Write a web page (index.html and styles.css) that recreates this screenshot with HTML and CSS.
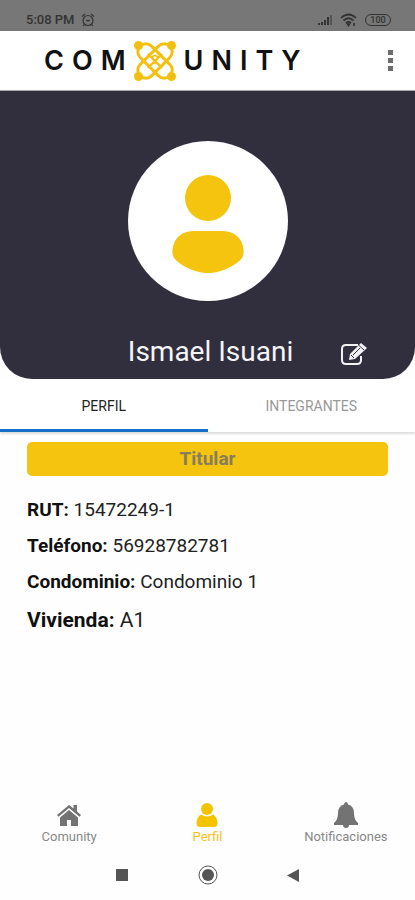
FILE: index.html
```html
<!DOCTYPE html>
<html lang="es">
<head>
  <meta charset="UTF-8">
  <meta name="viewport" content="width=device-width, initial-scale=1.0">
  <title>Comunity</title>
  <link rel="stylesheet" href="styles.css">
</head>
<body>

<div class="statusbar">
  <span>5:08 PM</span>
  <svg width="14" height="14" viewBox="0 0 14 14" fill="none" stroke="#333" stroke-width="1.2">
    <circle cx="7" cy="7.5" r="5"/>
    <path d="M1 3.5L4 1M13 3.5L10 1M3.5 11.5L2 13M10.5 11.5L12 13M5 7l2 1 2-1"/>
  </svg>
  <div class="status-icons">
    <svg width="16" height="12" viewBox="0 0 16 12" fill="#333">
      <path d="M1 9h2v2H1zM4 8h2v3H4zM7 6h2v5H7zM10 3h2v8h-2z"/>
      <path d="M13 1h2v10h-2z" fill="#555"/>
    </svg>
    <svg width="18" height="14" viewBox="0 0 18 14" fill="none" stroke="#333" stroke-width="1.7">
      <path d="M1 5Q8.500-2 16 5M3.500 7.500Q8.500 3 13.500 7.500M6 10Q8.500 8 11 10"/>
      <path d="M7.500 11h2l-1 1.500zM14 10v3"/>
    </svg>
    <span class="battery">100</span>
  </div>
</div>

<header class="topbar">
  <div class="logo" aria-label="Comunity">
    <span>C</span><span>O</span><span>M</span>
    <svg width="42" height="40" viewBox="0 0 42 40" fill="none" stroke="#f3c010" stroke-width="3">
      <g fill="#f3c010" stroke="none">
        <circle cx="4.500" cy="4.500" r="4.500"/>
        <circle cx="37.500" cy="4.500" r="4.500"/>
        <circle cx="4.500" cy="35.500" r="4.500"/>
        <circle cx="37.500" cy="35.500" r="4.500"/>
      </g>
      <rect x="0" y="12" width="42" height="16" rx="8" transform="rotate(45 21 20)"/>
      <rect x="0" y="12" width="42" height="16" rx="8" transform="rotate(-45 21 20)"/>
      <path d="M14 13l14 14M28 13L14 27" stroke-width="2"/>
      <circle cx="21" cy="17" r="2.500" stroke-width="1.6"/>
      <path d="M16 26q0-4 5-4t5 4" stroke-width="1.6"/>
    </svg>
    <span>U</span><span>N</span><span>I</span><span>T</span><span>Y</span>
  </div>
  <button class="menu-btn" aria-label="Menú">
    <svg width="6" height="22" viewBox="0 0 6 22" fill="#6d6d6d">
      <path d="M0 0h5v5H0zM0 8h5v5H0zM0 16h5v5H0z"/>
    </svg>
  </button>
</header>

<section class="hero">
  <div class="avatar">
    <svg width="74" height="100" viewBox="0 0 74 100" fill="#f4c40f">
      <circle cx="37" cy="23" r="23"/>
      <path d="M22 56H52Q64 56 70 66Q74 73 72 81C70 87 53 98 37 98S4 87 2 81Q0 73 4 66Q10 56 22 56z"/>
    </svg>
  </div>
  <div class="name-row">
    <h1>Ismael Isuani</h1>
    <button class="edit-btn" aria-label="Editar">
      <svg width="26" height="22" viewBox="0 0 26 22" fill="none" stroke="#f2f2f5" stroke-width="2">
        <path d="M17 2H5Q1 2 1 6V17Q1 21 5 21H16Q20 21 20 17V13"/>
        <path d="M8 17l1-6L20 0l6 5L14 16z" fill="#f2f2f5" stroke="none"/>
        <path d="M12 12l7-7M18 2.500l5 4.500M10 12l3 3" stroke="#312e3e" stroke-width="1"/>
      </svg>
    </button>
  </div>
</section>

<div class="tabs" role="tablist">
  <button class="tab active" role="tab" aria-selected="true">PERFIL</button>
  <button class="tab" role="tab" aria-selected="false">INTEGRANTES</button>
</div>

<main class="content">
  <div class="badge">Titular</div>
  <p><b>RUT:</b> 15472249-1</p>
  <p><b>Teléfono:</b> 56928782781</p>
  <p><b>Condominio:</b> Condominio 1</p>
  <p class="home"><b>Vivienda:</b> A1</p>
</main>

<nav class="bottom-nav">
  <a href="#">
    <svg width="26" height="26" viewBox="0 0 26 26" fill="#737373">
      <path d="M13 3L1 13l1.500 1.800L13 6l10.500 8.800L25 13l-4-3.500V3h-3.500v3.500z"/>
      <path d="M13 8L4 15.500V24h7v-6h4v6h7v-8.500z"/>
    </svg>
    Comunity
  </a>
  <a href="#" class="active">
    <svg width="26" height="26" viewBox="0 0 26 26" fill="#f5c400">
      <circle cx="13" cy="7" r="6"/>
      <path d="M7 12.500Q13 16.500 19 12.500Q23 14.500 23.500 21Q23.500 25 20 25H6Q2.500 25 2.500 21Q3 14.500 7 12.500z"/>
    </svg>
    Perfil
  </a>
  <a href="#">
    <svg width="26" height="26" viewBox="0 0 26 26" fill="#737373">
      <path d="M13 0Q15 0 15 2.500Q21 4 21 11Q21 18 25 21V23H1V21Q5 18 5 11Q5 4 11 2.500Q11 0 13 0z"/>
      <path d="M10 23h6q0 3-3 3t-3-3z"/>
    </svg>
    Notificaciones
  </a>
</nav>

<div class="system-nav">
  <svg width="20" height="20" viewBox="0 0 20 20" fill="#555"><path d="M4 4h12v12H4z"/></svg>
  <svg width="20" height="20" viewBox="0 0 20 20"><circle cx="10" cy="10" r="9" fill="none" stroke="#555"/><circle cx="10" cy="10" r="6" fill="#555"/></svg>
  <svg width="20" height="20" viewBox="0 0 20 20" fill="#555"><path d="M15 4v13L3 10.500z"/></svg>
</div>

</body>
</html>
```

FILE: styles.css
```css
* {
  box-sizing: border-box;
}
body {
  margin: 0;
  min-height: 100vh;
  display: flex;
  flex-direction: column;
  background: #fefefe;
  color: #222;
  font-family: Roboto, sans-serif;
}
button {
  padding: 0;
  border: 0;
  background: none;
  font-family: inherit;
  cursor: pointer;
}
svg {
  display: block;
}
.statusbar {
  display: flex;
  align-items: center;
  gap: 6px;
  height: 31px;
  padding: 8px 24px 0 26px;
  background: #777;
  color: #333;
  font-size: 13px;
  font-weight: 500;
}
.status-icons {
  display: flex;
  align-items: center;
  gap: 7px;
  margin-left: auto;
}
.battery {
  width: 26px;
  border: 1px solid #333;
  border-radius: 6px;
  font-size: 9px;
  line-height: 10px;
  text-align: center;
}
.topbar {
  display: flex;
  align-items: center;
  justify-content: space-between;
  height: 60px;
  padding: 0 21px 0 44px;
  background: #fff;
  border-bottom: 1px solid #aaa;
}
.logo {
  display: flex;
  align-items: center;
  gap: 8px;
  color: #111;
  font-family: Inter, sans-serif;
  font-size: 27px;
  font-weight: 600;
}
.menu-btn {
  padding: 4px 0;
}
.hero {
  display: flex;
  flex-direction: column;
  align-items: center;
  padding: 50px 48px 8px;
  background: #312e3e;
  border-radius: 0 0 32px 32px;
}
.avatar {
  display: flex;
  align-items: center;
  justify-content: center;
  width: 160px;
  height: 160px;
  padding-top: 8px;
  border-radius: 50%;
  background: #fff;
}
.name-row {
  display: grid;
  grid-template-columns: 1fr auto 1fr;
  align-items: center;
  width: 100%;
  margin-top: 32px;
}
.name-row h1 {
  grid-column: 2;
  margin: 0;
  padding-left: 6px;
  color: #f5f5f7;
  font-size: 28px;
  font-weight: 400;
  line-height: 38px;
}
.edit-btn {
  justify-self: end;
  padding-top: 4px;
}
.tabs {
  display: flex;
  background: #fff;
  box-shadow: 0 2px 2px #ddd;
}
.tab {
  flex: 1;
  height: 53px;
  padding-top: 4px;
  border-bottom: 3px solid transparent;
  color: #999;
  font-size: 14px;
}
.tab.active {
  border-color: #1670c8;
  color: #222;
}
.content {
  flex: 1;
  padding: 10px 27px;
}
.badge {
  margin-bottom: 22px;
  border-radius: 5px;
  background: #f4c40f;
  color: #877d5c;
  font-size: 19px;
  font-weight: 700;
  line-height: 34px;
  text-align: center;
}
.content p {
  margin: 0 0 12px;
  font-size: 19px;
  line-height: 24px;
}
.content b {
  font-weight: 700;
  color: #111;
}
.content .home {
  margin-top: 14px;
  font-size: 21px;
}
.bottom-nav {
  display: flex;
  justify-content: space-between;
  height: 50px;
}
.bottom-nav a {
  display: flex;
  flex-direction: column;
  align-items: center;
  flex: 1;
  gap: 1px;
  color: #888;
  font-size: 13px;
  line-height: 15px;
  text-decoration: none;
}
.bottom-nav .active {
  color: #f0c419;
}
.system-nav {
  display: flex;
  justify-content: center;
  gap: 66px;
  padding: 13px 0 15px;
}
```
